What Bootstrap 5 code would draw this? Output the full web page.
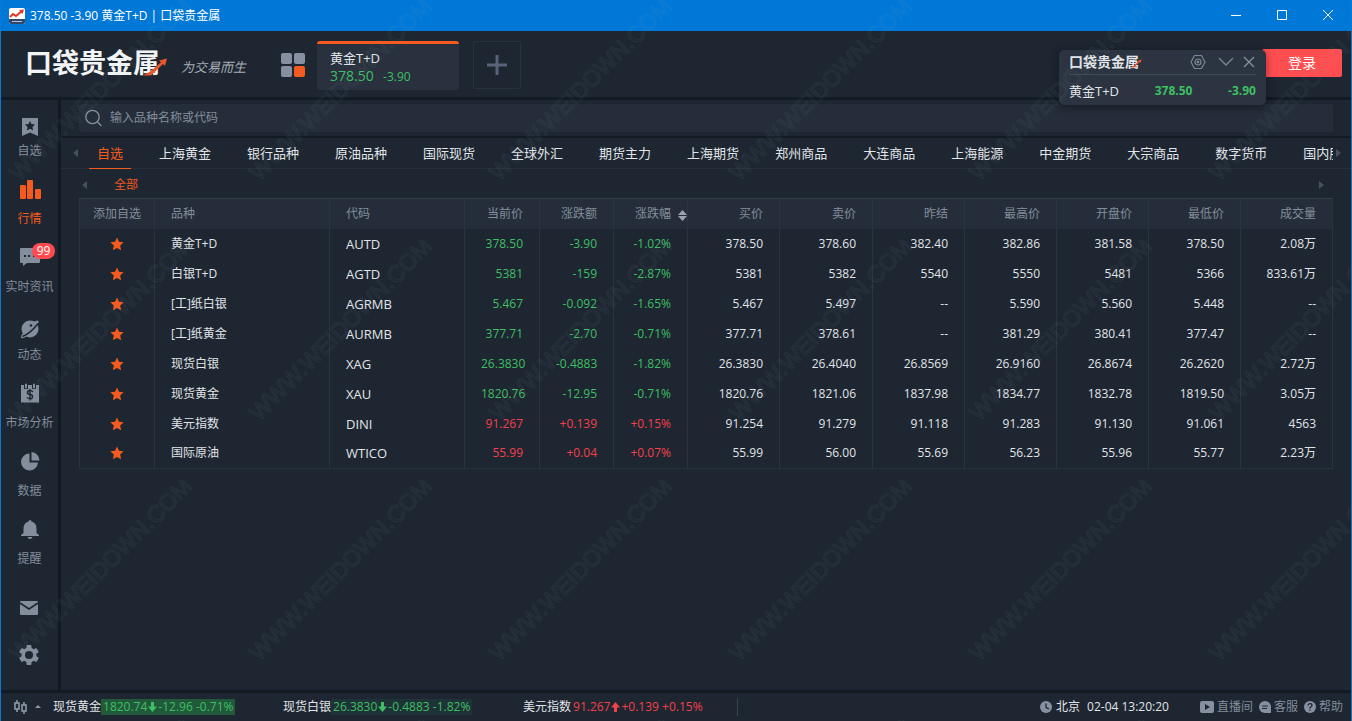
<!DOCTYPE html>
<html lang="zh-CN">
<head>
<meta charset="utf-8">
<meta name="viewport" content="width=device-width, initial-scale=1">
<title>378.50 -3.90 黄金T+D | 口袋贵金属</title>
<link href="https://cdn.jsdelivr.net/npm/bootstrap@5.3.0/dist/css/bootstrap.min.css" rel="stylesheet">
<style>
:root{--bg:#1d2631;--panel:#242d39;--edge:#121a22;--line:#2a343f;--muted:#838d9c;--accent:#f55a1e;--up:#f5404c;--down:#3fbf63}
body{background:var(--bg);color:#e1e4e8;font:12px/18px "Open Sans","Noto Sans CJK SC",sans-serif}
button{font:inherit;color:inherit;background:none;border:0;padding:0}
svg{display:block;flex:none}
a{color:inherit;text-decoration:none}
.frame{min-height:100vh;border:solid #0a78d4;border-width:0 1px 1px;overflow:hidden}
.titlebar{background:#0078d7;height:31px;padding:0 17px 0 8px;color:#fff}
.app-title{gap:5px}
.win-btns{gap:34px}
.topbar{height:69px;border-bottom:3px solid var(--edge);padding-left:24px;padding-right:9px;padding-bottom:2px}
.logo{font-weight:700;font-size:27px;line-height:32px;color:#f3f4f5}
.logo svg{position:absolute;right:-8px;bottom:3px}
.slogan{font:italic 13px/18px "Noto Sans CJK SC",sans-serif;color:#a9aeb5;margin-left:21px;margin-top:8px}
.grid-btn{margin-left:35px}
.quote-tab{width:142px;height:49px;margin-left:12px;background:#28313d;border-top:3px solid var(--accent);border-radius:3px;padding:5px 13px;text-align:left;font-size:13px}
.quote-price{font-size:14px}
.quote-change{font-size:12px;margin-left:6px}
.add-tab{width:48px;height:48px;margin-left:14px;border:1px solid #28323e;border-radius:2px}
.login{width:80px;height:28px;background:#ff4d50;border-radius:2px;color:#fff;font-size:14px}
.ticker{position:absolute;top:50px;right:85px;width:207px;height:55px;background:#2b3440;border-radius:5px;box-shadow:0 2px 8px #0006;padding:0 10px;z-index:3}
.ticker-head{height:25px;border-bottom:1px solid #414b57}
.ticker-logo{font-size:14px;font-weight:700}
.ticker-logo svg{position:absolute;right:-3px;bottom:3px}
.ticker-quote{height:31px;font-size:13px}
.ticker-quote strong{font-size:12px}
.sidebar{width:60px;border-right:3px solid var(--edge);color:var(--muted)}
.side-item{height:68px;padding:8px 0;gap:1px}
.side-item.active{color:var(--accent)}
.side-badge{position:absolute;left:31px;top:7px;width:23px;height:16px;line-height:16px;border-radius:8px;background:#ff4a50;color:#fff;text-align:center}
.side-mail{margin-top:20px}
.side-small{height:47px;padding-right:2px}
.search-row{height:38px;padding:4px 18px;border-bottom:2px solid var(--edge)}
.search-box{height:28px;background:var(--panel);border-radius:2px;padding-left:6px;gap:8px}
.search-box input{background:none;border:0;outline:0;color:inherit;font:inherit}
.search-box input::placeholder{color:var(--muted);opacity:1}
.cat-row{height:31px;border-bottom:1px solid #27303b;padding:0 10px 0 11px}
.cats{gap:36px;padding-left:19px;height:31px}
.cats a{font-size:13px;line-height:30px;height:31px;position:relative}
.cats a.active{color:var(--accent)}
.cats a.active::after{content:"";position:absolute;left:-8px;right:-8px;bottom:0;height:1px;background:var(--accent)}
.sub-row{height:29px;padding:2px 26px 0 20px;gap:27px;color:var(--accent)}
.table-wrap{padding:0 18px}
.quotes{table-layout:fixed;width:100%;border:1px solid var(--line);border-collapse:collapse;white-space:nowrap}
.quotes th,.quotes td{height:30px;padding:0 16px;text-align:right;border-right:1px solid var(--line)}
.quotes th{font-weight:400;color:var(--muted);background:var(--panel);position:relative;border-top:1px solid #353f4b}
.quotes tr>:nth-child(1){text-align:center;padding:0}
.quotes tr>:nth-child(2),.quotes tr>:nth-child(3){text-align:left}
.quotes td:nth-child(3){font-size:13px}
.quotes td:first-child svg{margin:auto}
.sort-icon{position:absolute;right:0;top:11px}
.down{color:var(--down)}
.up{color:var(--up)}
.statusbar{height:32px;border-top:3px solid var(--edge);padding:0 8px 2px 12px}
.stat-first{width:230px}
.stat-next{width:240px}
.stat-last{width:215px;border-right:1px solid #39434f}
.tick{padding:0 2px;height:16px}
.flash{background:#215a3b}
.flash-dim{background:#1e3337}
.clock{margin-right:31px}
.tail{color:var(--muted);gap:6px}
.tail a{display:flex;align-items:center;gap:3px}
.watermark{position:absolute;inset:0;pointer-events:none;z-index:5}
</style>
</head>
<body>
<svg width="0" height="0" class="position-absolute" aria-hidden="true">
  <symbol id="star" viewBox="0 0 14 14"><path fill="#f55a1e" d="M7 .5 9 4.8l4.6.5-3.400 3.200.9 4.700L7 10.900 2.900 13.200l.9-4.700L.4 5.300 5 4.800z"/></symbol>
  <symbol id="swoosh" viewBox="0 0 26 18"><path fill="#e8562c" d="M1 17.500h8L21 6l2 2 2-7.500-8 2 2 1.800L9 13z"/></symbol>
</svg>
<div class="frame d-flex flex-column position-relative">
  <header class="titlebar d-flex align-items-center justify-content-between">
    <div class="app-title d-flex align-items-center">
      <svg width="16" height="16" viewBox="0 0 16 16"><rect width="16" height="16" rx="2" fill="#fff"/><path d="M0 11h16v3a2 2 0 0 1-2 2H2a2 2 0 0 1-2-2z" fill="#33466b"/><path d="m1 9 3-3 3 2 6-5" fill="none" stroke="#e43425" stroke-width="2"/><path d="m10 2 5-.5L13.500 6z" fill="#e43425"/><path d="M3 13.500h10" stroke="#b9c3d6"/></svg>
      <span>378.50 -3.90 黄金T+D | 口袋贵金属</span>
    </div>
    <div class="win-btns d-flex">
      <button aria-label="最小化"><svg width="12" height="12"><path d="M1 5.500h10" stroke="#fff"/></svg></button>
      <button aria-label="最大化"><svg width="12" height="12"><path d="M1.500 .5h9v9h-9z" fill="none" stroke="#fff"/></svg></button>
      <button aria-label="关闭"><svg width="12" height="12"><path d="m1 0 10 10M11 0 1 10" stroke="#fff"/></svg></button>
    </div>
  </header>

  <div class="topbar d-flex align-items-center">
    <div class="logo position-relative">口袋贵金属<svg width="26" height="18"><use href="#swoosh"/></svg></div>
    <div class="slogan">为交易而生</div>
    <button class="grid-btn mt-1" aria-label="面板"><svg width="24" height="24"><g fill="#8790a0"><rect width="11" height="11" rx="2"/><rect x="13" width="11" height="11" rx="2"/><rect y="13" width="11" height="11" rx="2"/></g><rect x="13" y="13" width="11" height="11" rx="2" fill="#f55a1e"/></svg></button>
    <button class="quote-tab mt-1"><span class="d-block">黄金T+D</span><span class="down d-block"><span class="quote-price">378.50</span> <span class="quote-change">-3.90</span></span></button>
    <button class="add-tab mt-1 d-flex align-items-center justify-content-center" aria-label="添加"><svg width="20" height="20"><path d="M0 10h20M10 0v20" stroke="#59627a" stroke-width="3"/></svg></button>
    <button class="login ms-auto">登录</button>
  </div>

  <div class="ticker">
    <div class="ticker-head d-flex align-items-center">
      <span class="ticker-logo position-relative">口袋贵金属<svg width="12" height="9"><use href="#swoosh"/></svg></span>
      <button class="ms-auto" aria-label="设置"><svg width="16" height="16" fill="none" stroke="#7b8694" stroke-width="1.200"><path d="M4.500 1.500h7L15 8l-3.500 6.500h-7L1 8z"/><circle cx="8" cy="8" r="3"/><circle cx="8" cy="8" r=".8"/></svg></button>
      <button class="ms-2 ps-1" aria-label="收起"><svg width="16" height="12"><path d="m1 2 7 7 7-7" fill="none" stroke="#7b8694" stroke-width="1.400"/></svg></button>
      <button class="ms-2" aria-label="关闭浮窗"><svg width="14" height="12"><path d="m2 1 10 10M12 1 2 11" stroke="#8a94a1" stroke-width="1.200"/></svg></button>
    </div>
    <div class="ticker-quote d-flex align-items-center justify-content-between"><span>黄金T+D</span><strong class="down">378.50</strong><strong class="down">-3.90</strong></div>
  </div>

  <div class="d-flex flex-grow-1">
    <nav class="sidebar flex-shrink-0 d-flex flex-column">
      <a href="#" class="side-item d-flex flex-column align-items-center"><svg width="31" height="33" fill="currentColor"><path fill-rule="evenodd" d="M8 10h16v18l-8-3.500L8 28zm8 3-1.500 3-3.500.5 2.500 2.500-.5 3.500 3-1.700 3 1.700-.5-3.500 2.500-2.500-3.500-.5z"/></svg><span>自选</span></a>
      <a href="#" class="side-item active d-flex flex-column align-items-center"><svg width="31" height="33" fill="currentColor"><rect x="6" y="9" width="6" height="14" rx="1"/><rect x="13" y="4" width="6" height="19" rx="1"/><rect x="21" y="13" width="6" height="10" rx="1"/></svg><span>行情</span></a>
      <a href="#" class="side-item position-relative d-flex flex-column align-items-center"><svg width="31" height="33"><path fill="currentColor" d="M7 4h18a1 1 0 0 1 1 1v13a1 1 0 0 1-1 1H13l-4 3v-3H7a1 1 0 0 1-1-1V5a1 1 0 0 1 1-1z"/><path d="M10 11h2v2h-2zM14 11h2v2h-2zM19 11h2v2h-2z" fill="#1d2631"/></svg><span class="side-badge">99</span><span>实时资讯</span></a>
      <a href="#" class="side-item d-flex flex-column align-items-center"><svg width="31" height="33"><circle cx="16" cy="17" r="8.500" fill="currentColor"/><path d="M19 10q5-2.500 5.500-1t-2 5M9 21q-3 4-1.500 5t5-1.500" fill="currentColor"/><path d="M8.500 24.500Q17 21 24 11.500" fill="none" stroke="#1d2631" stroke-width="1.500"/><circle cx="17" cy="13.500" r="1.300" fill="#1d2631"/></svg><span>动态</span></a>
      <a href="#" class="side-item d-flex flex-column align-items-center"><svg width="31" height="33"><path fill="currentColor" d="M7 5h18v17.500H7z"/><path d="M10 3h4v6h-4zM18 3h4v6h-4z" fill="#1d2631"/><path d="M12 4.500v3M20 4.500v3" stroke="currentColor" stroke-width="2" stroke-linecap="round"/><path d="M19 12q-1-1.500-3-1.500-2.500 0-2.500 2t2.500 2 2.500 2.200-2.500 2-3-1.500M16 9v11.500" fill="none" stroke="#1d2631" stroke-width="1.500"/></svg><span>市场分析</span></a>
      <a href="#" class="side-item d-flex flex-column align-items-center"><svg width="31" height="33" fill="currentColor"><path d="M15.500 5.500v9h8.500a8.500 8.500 0 1 1-8.500-9z"/><path d="M17.500 4a8.500 8.500 0 0 1 8 8.500h-8z"/></svg><span>数据</span></a>
      <a href="#" class="side-item d-flex flex-column align-items-center"><svg width="31" height="33" fill="currentColor"><path d="M16 4q1.500 0 1.500 1.500 5 1.500 5 7v4.500l2.500 2v1H7v-1l2.500-2v-4.500q0-5.500 5-7Q14.500 4 16 4zM13.500 21h5q-.5 2-2.500 2t-2.500-2z"/></svg><span>提醒</span></a>
      <a href="#" class="side-mail side-small d-flex align-items-start justify-content-center" aria-label="消息"><svg width="18" height="33"><rect y="5" width="18" height="14" rx="1" fill="currentColor"/><path d="m0 7 9 6 9-6" fill="none" stroke="#1d2631" stroke-width="1.600"/></svg></a>
      <a href="#" class="side-small d-flex align-items-start justify-content-center" aria-label="设置"><svg width="20" height="24"><g transform="translate(10 12)" fill="currentColor"><circle r="7.500"/><g id="tooth"><rect x="-2.500" y="-10" width="5" height="20" rx="1"/></g><use href="#tooth" transform="rotate(60)"/><use href="#tooth" transform="rotate(120)"/><circle r="4" fill="#1d2631"/></g></svg></a>
    </nav>

    <main class="flex-grow-1 overflow-hidden">
      <div class="search-row">
        <div class="search-box d-flex align-items-center">
          <svg width="17" height="18" fill="none" stroke="#87919f" stroke-width="1.300"><circle cx="7.500" cy="8" r="6.700"/><path d="m12.500 13 4 4"/></svg>
          <input type="text" class="flex-grow-1 p-0" placeholder="输入品种名称或代码" aria-label="搜索品种">
        </div>
      </div>
      <div class="cat-row d-flex align-items-center">
        <svg width="6" height="8"><path d="M6 0v8L1 4z" fill="#47515e"/></svg>
        <nav class="cats d-flex flex-grow-1 overflow-hidden text-nowrap">
          <a href="#" class="active">自选</a><a href="#">上海黄金</a><a href="#">银行品种</a><a href="#">原油品种</a><a href="#">国际现货</a><a href="#">全球外汇</a><a href="#">期货主力</a><a href="#">上海期货</a><a href="#">郑州商品</a><a href="#">大连商品</a><a href="#">上海能源</a><a href="#">中金期货</a><a href="#">大宗商品</a><a href="#">数字货币</a><a href="#">国内股指</a>
        </nav>
        <svg width="8" height="8"><path d="M3 0v8l5-4z" fill="#47515e"/></svg>
      </div>
      <div class="sub-row d-flex align-items-center">
        <svg width="6" height="8"><path d="M6 0v8L1 4z" fill="#47515e"/></svg>
        <a href="#">全部</a>
        <svg class="ms-auto" width="6" height="8"><path d="M0 0v8l5-4z" fill="#47515e"/></svg>
      </div>
      <div class="table-wrap">
        <table class="quotes">
          <colgroup><col style="width:75px"><col style="width:175px"><col style="width:135px"><col style="width:75px"><col style="width:74px"><col style="width:74px"><col style="width:92px"><col style="width:93px"><col style="width:92px"><col style="width:92px"><col style="width:92px"><col style="width:92px"><col style="width:92px"></colgroup>
          <thead><tr><th>添加自选</th><th>品种</th><th>代码</th><th>当前价</th><th>涨跌额</th><th>涨跌幅<svg class="sort-icon" width="9" height="11" fill="#9aa2ae"><path d="M4.500 0 9 5H0zM4.500 11 9 6H0z"/></svg></th><th>买价</th><th>卖价</th><th>昨结</th><th>最高价</th><th>开盘价</th><th>最低价</th><th>成交量</th></tr></thead>
          <tbody>
            <tr><td><svg width="14" height="14"><use href="#star"/></svg></td><td>黄金T+D</td><td>AUTD</td><td class="down">378.50</td><td class="down">-3.90</td><td class="down">-1.02%</td><td>378.50</td><td>378.60</td><td>382.40</td><td>382.86</td><td>381.58</td><td>378.50</td><td>2.08万</td></tr>
            <tr><td><svg width="14" height="14"><use href="#star"/></svg></td><td>白银T+D</td><td>AGTD</td><td class="down">5381</td><td class="down">-159</td><td class="down">-2.87%</td><td>5381</td><td>5382</td><td>5540</td><td>5550</td><td>5481</td><td>5366</td><td>833.61万</td></tr>
            <tr><td><svg width="14" height="14"><use href="#star"/></svg></td><td>[工]纸白银</td><td>AGRMB</td><td class="down">5.467</td><td class="down">-0.092</td><td class="down">-1.65%</td><td>5.467</td><td>5.497</td><td>--</td><td>5.590</td><td>5.560</td><td>5.448</td><td>--</td></tr>
            <tr><td><svg width="14" height="14"><use href="#star"/></svg></td><td>[工]纸黄金</td><td>AURMB</td><td class="down">377.71</td><td class="down">-2.70</td><td class="down">-0.71%</td><td>377.71</td><td>378.61</td><td>--</td><td>381.29</td><td>380.41</td><td>377.47</td><td>--</td></tr>
            <tr><td><svg width="14" height="14"><use href="#star"/></svg></td><td>现货白银</td><td>XAG</td><td class="down">26.3830</td><td class="down">-0.4883</td><td class="down">-1.82%</td><td>26.3830</td><td>26.4040</td><td>26.8569</td><td>26.9160</td><td>26.8674</td><td>26.2620</td><td>2.72万</td></tr>
            <tr><td><svg width="14" height="14"><use href="#star"/></svg></td><td>现货黄金</td><td>XAU</td><td class="down">1820.76</td><td class="down">-12.95</td><td class="down">-0.71%</td><td>1820.76</td><td>1821.06</td><td>1837.98</td><td>1834.77</td><td>1832.78</td><td>1819.50</td><td>3.05万</td></tr>
            <tr><td><svg width="14" height="14"><use href="#star"/></svg></td><td>美元指数</td><td>DINI</td><td class="up">91.267</td><td class="up">+0.139</td><td class="up">+0.15%</td><td>91.254</td><td>91.279</td><td>91.118</td><td>91.283</td><td>91.130</td><td>91.061</td><td>4563</td></tr>
            <tr><td><svg width="14" height="14"><use href="#star"/></svg></td><td>国际原油</td><td>WTICO</td><td class="up">55.99</td><td class="up">+0.04</td><td class="up">+0.07%</td><td>55.99</td><td>56.00</td><td>55.69</td><td>56.23</td><td>55.96</td><td>55.77</td><td>2.23万</td></tr>
          </tbody>
        </table>
      </div>
    </main>
  </div>

  <footer class="statusbar d-flex align-items-center text-nowrap">
    <button class="d-flex align-items-center me-2 pe-1" aria-label="行情列表"><svg width="28" height="16" fill="none" stroke="#8f98a6" stroke-width="1.600"><path d="M4 1v3M4 10v3M11 3v3M11 12v3"/><rect x="2" y="4" width="4" height="6"/><rect x="9" y="6" width="4" height="6"/><path d="m22 9 3-3 3 3z" fill="#8f98a6" stroke="none"/></svg></button>
    <div class="stat-first d-flex align-items-center">现货黄金<span class="tick flash down d-flex align-items-center">1820.74<svg width="11" height="10" fill="currentColor"><path d="M4 0h3v4.500h3L5.500 10 1 4.500h3z"/></svg>-12.96 -0.71%</span></div>
    <div class="stat-next d-flex align-items-center">现货白银<span class="tick flash-dim down d-flex align-items-center">26.3830<svg width="11" height="10" fill="currentColor"><path d="M4 0h3v4.500h3L5.500 10 1 4.500h3z"/></svg>-0.4883 -1.82%</span></div>
    <div class="stat-last d-flex align-items-center">美元指数<span class="tick up d-flex align-items-center">91.267<svg width="11" height="10" fill="currentColor"><path d="M4 10h3V5.500h3L5.500 0 1 5.500h3z"/></svg>+0.139 +0.15%</span></div>
    <div class="clock ms-auto d-flex align-items-center"><svg class="me-1" width="12" height="12"><circle cx="6" cy="6" r="6" fill="#8790a0"/><path d="M6 2.500v4l3 1.500" fill="none" stroke="#1d2631" stroke-width="1.300"/></svg><span class="me-1">北京</span>&nbsp;<span>02-04 13:20:20</span></div>
    <div class="tail d-flex">
      <a href="#"><svg width="14" height="12"><rect width="14" height="12" rx="2" fill="#8790a0"/><path d="M5 3v6l5-3z" fill="#1d2631"/></svg>直播间</a>
      <a href="#"><svg width="12" height="12"><path d="M6 0a6 6 0 0 1 6 6v6H6A6 6 0 0 1 6 0z" fill="#8790a0"/><path d="M3 5h6M3 7.500h5" stroke="#1d2631"/></svg>客服</a>
      <a href="#"><svg width="12" height="12"><circle cx="6" cy="6" r="6" fill="#8790a0"/><path d="M4 4.500Q4 2.700 6 2.700t2 1.800Q8 5.500 6 6.500v1M6 8.500v1.300" fill="none" stroke="#1d2631" stroke-width="1.300"/></svg>帮助</a>
    </div>
  </footer>

  <svg class="watermark" width="100%" height="100%" aria-hidden="true">
    <defs><pattern id="wm" width="240" height="240" patternUnits="userSpaceOnUse"><text transform="translate(18 182) rotate(-45)" font-family="Liberation Sans" font-size="23" fill="none" stroke="#8ea2b5" stroke-opacity=".09">WWW.WEIDOWN.COM</text></pattern></defs>
    <rect width="100%" height="100%" fill="url(#wm)"/>
  </svg>
</div>
<script src="https://cdn.jsdelivr.net/npm/bootstrap@5.3.0/dist/js/bootstrap.bundle.min.js"></script>
</body>
</html>
